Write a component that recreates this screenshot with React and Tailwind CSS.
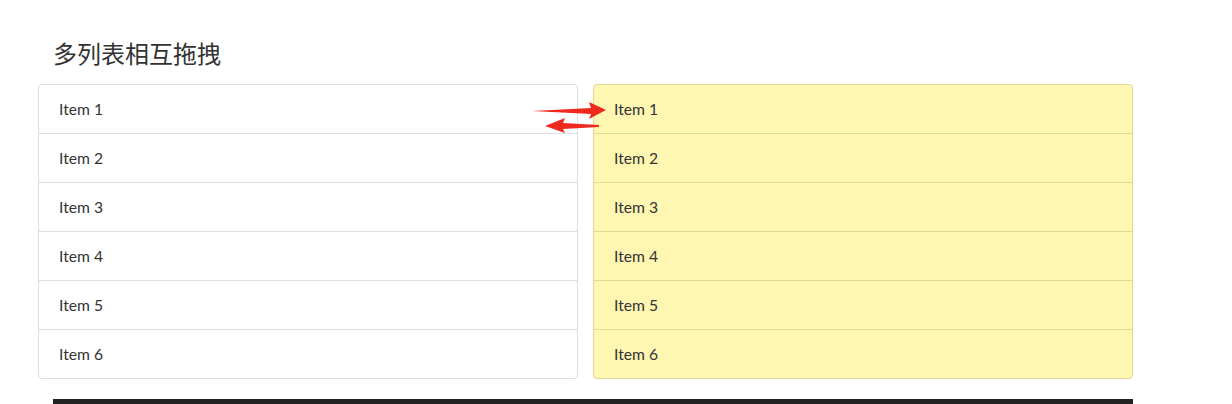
import React from "react";

const items = ["Item 1", "Item 2", "Item 3", "Item 4", "Item 5", "Item 6"];

const List = ({ yellow }) => (
  <ul
    className={
      "w-[540px] rounded-[4px] border " +
      (yellow ? "border-[#e3d795] bg-[#fff6b2]" : "border-[#dddddd] bg-white")
    }
  >
    {items.map((it, i) => (
      <li
        key={it}
        className={
          "flex items-center pl-[20px] pt-[2px] text-[15.7px] text-[#333333] " +
          (i > 0 ? (yellow ? "h-[49px] border-t border-[#e3d795]" : "h-[49px] border-t border-[#dddddd]") : "h-[48px]")
        }
      >
        {it}
      </li>
    ))}
  </ul>
);

export default function App() {
  return (
    <div
      className="relative h-[404px] w-[1232px] overflow-hidden bg-white"
      style={{ fontFamily: "Lato, 'Noto Sans CJK SC', sans-serif" }}
    >
      <div className="pl-[38px] pt-[38px]">
        <h1 className="ml-[15px] h-[32px] text-[24px] leading-[32px] text-[#333333]">
          多列表相互拖拽
        </h1>
        <div className="mt-[14px] flex gap-[15px]">
          <List />
          <List yellow />
        </div>
        <div className="ml-[15px] mt-[20px] h-[6px] w-[1080px] bg-[#222222]" />
      </div>

      {/* drag arrows */}
      <svg
        className="absolute left-[528px] top-[98px]"
        width="84"
        height="40"
        viewBox="0 0 84 40"
      >
        <path d="M4 13 L63 10 L61 4 L78 12 L61 21 L63 16 Z" fill="#ee2a1e" />
        <path d="M71 27 L35 25 L37 20 L17 28 L37 35 L35 31 L71 29 Z" fill="#ee2a1e" />
      </svg>
    </div>
  );
}
